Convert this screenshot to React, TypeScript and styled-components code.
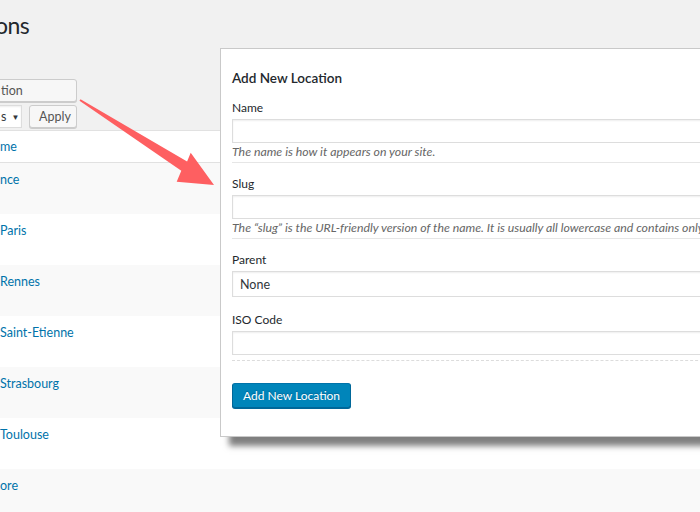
import React from "react";
import styled, { createGlobalStyle } from "styled-components";

const Global = createGlobalStyle`
  html, body { margin: 0; padding: 0; background: #f1f1f1; }
  body { font-family: Lato, "Open Sans", sans-serif; color: #23282d; }
  * { box-sizing: border-box; }
`;

const Page = styled.div`
  position: relative;
  width: 700px;
  height: 512px;
  overflow: hidden;
  background: #f1f1f1;
`;

const Title = styled.h1`
  margin: 10px 0 0 -5px;
  font-size: 23px;
  line-height: 30px;
  font-weight: 400;
  letter-spacing: -0.5px;
  color: #23282d;
  white-space: nowrap;
`;

const Toolbar = styled.div`
  margin-top: 39px;
  display: flex;
  flex-direction: column;
  align-items: flex-start;
  gap: 3px;
`;

const GreyButton = styled.div<{ $w: number; $offset?: number }>`
  display: flex;
  align-items: center;
  height: 23px;
  width: ${(p) => p.$w}px;
  margin-left: ${(p) => -(p.$offset ?? 0)}px;
  padding-left: ${(p) => ((p.$offset ?? 0) === 0 ? 9 : p.$offset)}px;
  background: #f7f7f7;
  border: 1px solid #cccccc;
  border-radius: 3px;
  box-shadow: 0 1px 0 #cccccc;
  color: #555555;
  font-size: 12.5px;
  white-space: nowrap;
`;

const BulkRow = styled.div`
  display: flex;
  gap: 7px;
`;

const SelectBox = styled.div`
  display: flex;
  align-items: center;
  gap: 5px;
  height: 23px;
  width: 52px;
  margin-left: -30px;
  padding-left: 30px;
  background: #ffffff;
  border: 1px solid #dddddd;
  box-shadow: inset 0 1px 2px rgba(0, 0, 0, 0.07);
  color: #32373c;
  font-size: 12.5px;
`;

const Caret = styled.span`
  font-size: 8px;
  color: #32373c;
`;

const Table = styled.div`
  margin-top: 2px;
  width: 100%;
  border-top: 1px solid #e1e1e1;
`;

const HeadRow = styled.div`
  height: 32px;
  padding-top: 6px;
  background: #ffffff;
  border-bottom: 1px solid #e1e1e1;
  font-size: 12.5px;
  line-height: 20px;
  color: #0073aa;
`;

const Row = styled.div<{ $alt: boolean }>`
  height: 51px;
  padding-top: 7px;
  background: ${(p) => (p.$alt ? "#f9f9f9" : "#ffffff")};
  font-size: 12.5px;
  line-height: 20px;
  color: #0073aa;
  white-space: nowrap;
`;

const Panel = styled.div`
  position: absolute;
  left: 220px;
  top: 48px;
  width: 520px;
  padding: 20px 11px 28px;
  background: #ffffff;
  border: 1px solid #c9c9c9;
  box-shadow: 9px 9px 6px rgba(0, 0, 0, 0.5);
`;

const PanelTitle = styled.h2`
  margin: 0 0 13px;
  font-size: 13.5px;
  line-height: 18px;
  font-weight: 600;
  color: #23282d;
`;

const Field = styled.div<{ $sep: "solid" | "dashed" | "none"; $pb: number; $mb?: number }>`
  display: flex;
  flex-direction: column;
  margin-bottom: ${(p) => p.$mb ?? 13}px;
  padding-bottom: ${(p) => p.$pb}px;
  border-bottom: ${(p) =>
    p.$sep === "none" ? "0" : `1px ${p.$sep} ${p.$sep === "dashed" ? "#dcdcdc" : "#e6e6e6"}`};
`;

const Label = styled.label`
  font-size: 12px;
  line-height: 16px;
  color: #23282d;
  margin-bottom: 3px;
`;

const Input = styled.div`
  height: 24px;
  background: #ffffff;
  border: 1px solid #dddddd;
  box-shadow: inset 0 1px 2px rgba(0, 0, 0, 0.07);
`;

const Select = styled.div`
  height: 26px;
  display: flex;
  align-items: center;
  padding-left: 7px;
  background: #ffffff;
  border: 1px solid #dddddd;
  box-shadow: inset 0 1px 2px rgba(0, 0, 0, 0.07);
  font-size: 12.5px;
  color: #32373c;
`;

const Desc = styled.p`
  margin: 1px 0 0;
  font-size: 12.3px;
  line-height: 16px;
  font-style: italic;
  color: #666666;
  white-space: nowrap;
  overflow: hidden;
`;

const PrimaryButton = styled.div`
  display: inline-flex;
  align-items: center;
  height: 25px;
  padding: 0 10px;
  background: #0085ba;
  border: 1px solid #0073aa;
  border-color: #0073aa #006799 #006799;
  border-radius: 3px;
  box-shadow: 0 1px 0 #006799;
  color: #ffffff;
  font-size: 12px;
  text-shadow: 0 -1px 1px #006799;
  white-space: nowrap;
`;

const ArrowLayer = styled.svg`
  position: absolute;
  left: 0;
  top: 0;
  pointer-events: none;
`;

const rows = ["nce", "Paris", "Rennes", "Saint-Etienne", "Strasbourg", "Toulouse", "ore"];

export default function App() {
  return (
    <>
      <Global />
      <Page>
        <Title>ons</Title>
        <Toolbar>
          <GreyButton $w={107} $offset={30}>tion</GreyButton>
          <BulkRow>
            <SelectBox>
              s<Caret>▼</Caret>
            </SelectBox>
            <GreyButton $w={48}>Apply</GreyButton>
          </BulkRow>
        </Toolbar>
        <Table>
          <HeadRow>me</HeadRow>
          {rows.map((r, i) => (
            <Row key={r} $alt={i % 2 === 0}>
              {r}
            </Row>
          ))}
        </Table>

        <Panel>
          <PanelTitle>Add New Location</PanelTitle>
          <Field $sep="solid" $pb={2}>
            <Label>Name</Label>
            <Input />
            <Desc>The name is how it appears on your site.</Desc>
          </Field>
          <Field $sep="solid" $pb={2}>
            <Label>Slug</Label>
            <Input />
            <Desc>
              The “slug” is the URL-friendly version of the name. It is usually all lowercase and contains only
              letters, numbers, and hyphens.
            </Desc>
          </Field>
          <Field $sep="none" $pb={2}>
            <Label>Parent</Label>
            <Select>None</Select>
          </Field>
          <Field $sep="dashed" $pb={5} $mb={22}>
            <Label>ISO Code</Label>
            <Input />
          </Field>
          <PrimaryButton>Add New Location</PrimaryButton>
        </Panel>

        <ArrowLayer width={700} height={512} viewBox="0 0 700 512">
          <polygon
            points="80.5,99.2 187.1,161.6 190.7,152.7 214,185 176.7,181.7 181.3,170.8 79.5,100.8"
            fill="#fe5f61"
          />
        </ArrowLayer>
      </Page>
    </>
  );
}
